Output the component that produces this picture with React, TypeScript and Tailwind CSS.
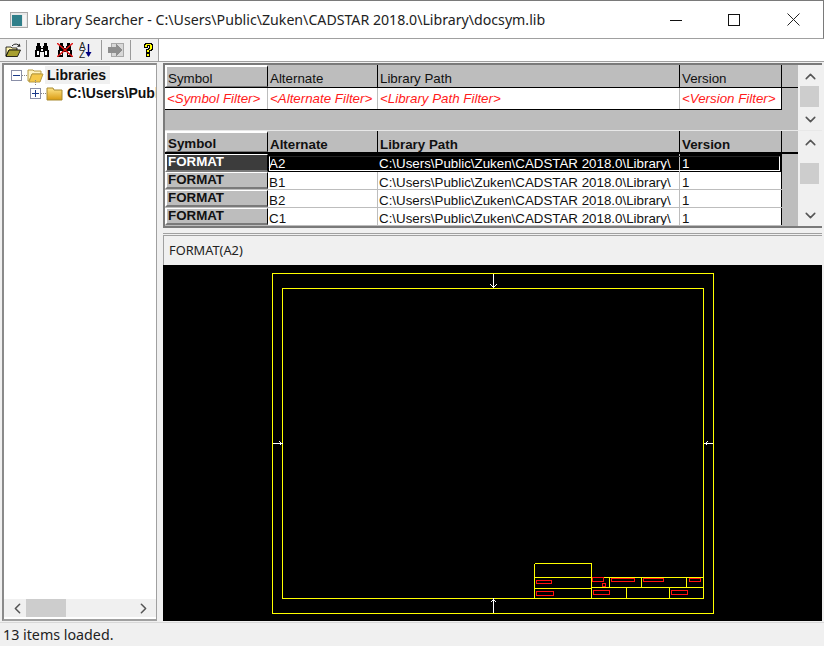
import { ChevronDown, ChevronLeft, ChevronRight, ChevronUp } from "lucide-react";

const columns = ["w-[103px]", "w-[110px]", "w-[302px]", "w-[102px]"];
const libraryPath = "C:\\Users\\Public\\Zuken\\CADSTAR 2018.0\\Library\\";

function HeaderCell({ label, width, bold, raised }: { label: string; width: string; bold?: boolean; raised?: boolean }) {
  return (
    <div
      className={`${width} h-full shrink-0 flex items-end bg-[#bdbdbd] text-[13.33px] leading-[15px] text-[#111] border-r border-black ${bold ? "font-bold pb-0" : "pb-[1px]"} ${
        raised ? "pl-[1px] !pb-0 border-t-2 border-l-2 border-b border-t-white border-l-white border-b-[#7a7a7a]" : "pl-[2px]"
      }`}
    >
      {label}
    </div>
  );
}

function FilterCell({ label, width, last }: { label: string; width: string; last?: boolean }) {
  return (
    <div className={`${width} h-full shrink-0 flex items-center pl-[2px] bg-white italic text-[13.33px] text-[#ff1a1a] whitespace-nowrap overflow-hidden border-r ${last ? "border-black" : "border-[#bdbdbd]"}`}>
      {label}
    </div>
  );
}

function ScrollBar({ thumbOffset }: { thumbOffset: string }) {
  return (
    <div className="w-[24px] h-full shrink-0 flex flex-col items-center bg-[#f0f0f0] relative">
      <ChevronUp className="w-[17px] h-[17px] mt-[3px] text-[#555]" strokeWidth={2.2} />
      <div className={`absolute left-[2px] w-[19px] h-[21px] bg-[#cdcdcd] ${thumbOffset}`} />
      <ChevronDown className="w-[17px] h-[17px] mt-auto mb-[2px] text-[#555]" strokeWidth={2.2} />
    </div>
  );
}

function SymbolRow({ alt, selected }: { alt: string; selected?: boolean }) {
  return (
    <div className={`h-[18px] flex text-[13.33px] leading-[16px] relative ${selected ? "bg-black text-white" : "bg-white text-[#111] border-b border-[#bdbdbd]"}`}>
      <div
        className={`${columns[0]} shrink-0 pl-[1px] font-bold leading-[14px] border-t border-l-2 border-b-2 border-r border-t-white border-l-white border-b-[#7a7a7a] border-r-black overflow-hidden ${
          selected ? "bg-[#3c3c3c] text-white" : "bg-[#bdbdbd] text-[#111]"
        }`}
      >
        FORMAT
      </div>
      <div className={`${columns[1]} shrink-0 pl-[1px] ${selected ? "pt-[2px] border-black" : "pt-[3px] border-[#bdbdbd]"} border-r overflow-hidden`}>{alt}</div>
      <div className={`${columns[2]} shrink-0 pl-[1px] ${selected ? "pt-[2px]" : "pt-[3px]"} border-r border-[#bdbdbd] overflow-hidden whitespace-nowrap`}>{libraryPath}</div>
      <div className={`${columns[3]} shrink-0 pl-[2px] ${selected ? "pt-[2px]" : "pt-[3px] border-r border-black"} overflow-hidden`}>1</div>
      {selected && <div className="absolute left-[104px] right-[2px] top-[2px] bottom-[1px] border border-white border-t-[#222] pointer-events-none" />}
    </div>
  );
}

function Binoculars({ crossed }: { crossed?: boolean }) {
  return (
    <svg className="shrink-0" width="16" height="14" viewBox="0 0 16 14" shapeRendering="crispEdges">
      <path d="M3 0h3v3h1v2h2V3h1V0h3v3h1v4h1v7H10V9H6v5H1V7h1V3h1z" fill="#000" />
      <path d="M3 8h2v4H3zM11 8h2v4h-2zM7 6h2v2H7z" fill="#fff" />
      {crossed && <path d="M0 0L16 14M16 0L0 14" stroke="#e01818" strokeWidth="1.4" shapeRendering="auto" />}
    </svg>
  );
}

function Separator() {
  return <div className="w-[1px] h-[20px] shrink-0 bg-[#9a9a9a]" />;
}

function Toolbar() {
  return (
    <div className="h-[23px] shrink-0 flex bg-white border-b border-[#a0a0a0]">
      <div className="w-[159px] h-full flex items-center pl-[5px] bg-[#f0f0f0] border-r border-[#a0a0a0]">
        <svg className="shrink-0 mr-[5px]" width="16" height="14" viewBox="0 0 16 14">
          <path d="M1 13V4h5l1 1h5v2H4L1 13z" fill="#fff6b0" stroke="#000" strokeWidth="0.8" />
          <path d="M1 13.500L4 7h11.500l-3 6.500z" fill="#a8a030" stroke="#000" strokeWidth="0.8" />
          <path d="M7 3C8.500 1 11 0.500 13.500 1.800" fill="none" stroke="#222" strokeWidth="1" />
          <path d="M15.500 3.500L12 4L14.500 0.500z" fill="#222" />
        </svg>
        <Separator />
        <div className="w-[7px] shrink-0" />
        <Binoculars />
        <div className="w-[7px] shrink-0" />
        <Binoculars crossed />
        <svg className="ml-[6px] shrink-0" width="13" height="16" viewBox="0 0 13 16">
          <text x="0" y="7.500" fontSize="10" fontFamily="Liberation Sans" fill="#222">A</text>
          <text x="0" y="15.500" fontSize="10" fontFamily="Liberation Sans" fill="#222">Z</text>
          <path d="M9.500 2v12" stroke="#000080" strokeWidth="1.4" />
          <path d="M6.500 10h6l-3 5z" fill="#000080" />
        </svg>
        <div className="w-[9px] shrink-0" />
        <Separator />
        <div className="w-[6px] shrink-0" />
        <svg className="shrink-0" width="16" height="14" viewBox="0 0 16 14" shapeRendering="crispEdges">
          <path d="M3 0.500h12.500v13H3z" fill="#d8d8d8" stroke="#a8a8a8" />
          <path d="M0 4h8V1l6 6-6 6V10H0z" fill="#8e8e8e" />
        </svg>
        <div className="w-[6px] shrink-0" />
        <Separator />
        <div className="w-[12px] shrink-0" />
        <svg className="shrink-0" width="11" height="14" viewBox="0 0 11 14" shapeRendering="crispEdges">
          <path d="M2.500 0.500h6v1h1v5h-1v1h-2v2h-3v-3h2v-1h1v-3h-2v2h-3v-3h1zM3.500 10.500h3v3h-3z" fill="#ffff00" stroke="#000" />
        </svg>
      </div>
    </div>
  );
}

function Drawing() {
  const yellow = "#ffff00";
  const red = "#ff1010";
  const lines = [
    "M534.500 563.500H591.500V598.500M534.500 563.500V598.500",
    "M534.500 577.500H703.500M534.500 588.500H591.500M591.500 587.500H703.500",
    "M609.500 577.500V587.500M641.500 577.500V587.500M686.500 577.500V587.500",
    "M626.500 587.500V598.500M669.500 587.500V598.500",
  ];
  const redBoxes = [
    [536.5, 580.5, 15, 3],
    [536.5, 591.5, 17, 4],
    [592.5, 577.5, 11, 4],
    [602.5, 583.5, 3, 3],
    [611.5, 578.5, 23, 3],
    [643.5, 578.5, 20, 3],
    [689.5, 578.5, 11, 3],
    [593.5, 590.5, 16, 4],
    [671.5, 590.5, 16, 4],
  ];
  return (
    <svg className="w-full h-full block" viewBox="163 265 659 356" shapeRendering="crispEdges" fill="none">
      <rect x="272.5" y="273.5" width="441" height="340" stroke={yellow} />
      <rect x="282.5" y="288.5" width="421" height="310" stroke={yellow} />
      {lines.map((d) => (
        <path key={d} d={d} stroke={yellow} />
      ))}
      {redBoxes.map(([x, y, w, h]) => (
        <rect key={`${x}-${y}`} x={x} y={y} width={w} height={h} stroke={red} />
      ))}
      <g stroke="#ffffff">
        <path d="M493.500 274V288M490.500 284.500L493.500 287.500L496.500 284.500" />
        <path d="M493.500 598V613M490.500 602.500L493.500 599.500L496.500 602.500" />
        <path d="M273 443.500H283M279.500 441.500L281.500 443.500L279.500 445.500" />
        <path d="M704 443.500H713M707.500 441.500L705.500 443.500L707.500 445.500" />
      </g>
    </svg>
  );
}

function TreeBox({ open }: { open?: boolean }) {
  return (
    <span className="w-[11px] h-[11px] shrink-0 border border-[#8a8fa8] relative flex items-center justify-center bg-white">
      <span className="w-[7px] h-[1px] bg-[#1a3a8a]" />
      {!open && <span className="absolute w-[1px] h-[7px] bg-[#1a3a8a]" />}
    </span>
  );
}

export default function App() {
  return (
    <div className="w-[824px] h-[646px] flex flex-col overflow-hidden bg-[#f0f0f0] text-[#111] font-['Liberation_Sans',sans-serif]">
      {/* Title bar */}
      <div className="h-[39px] shrink-0 flex items-center bg-white border-t border-r border-[#7a7a7a] border-b border-b-[#a0a0a0]">
        <svg className="ml-[10px] shrink-0" width="18" height="16" viewBox="0 0 18 16" shapeRendering="crispEdges">
          <rect x="0.5" y="0.5" width="17" height="15" fill="#e8e8e8" stroke="#a8a8a8" />
          <rect x="2" y="3" width="10" height="11" fill="#2f7f8a" />
          <rect x="13" y="3" width="3" height="11" fill="#f4f4f4" />
        </svg>
        <span className="ml-[7px] font-['Noto_Sans',sans-serif] text-[14.17px] text-[#222] whitespace-nowrap">
          {"Library Searcher - C:\\Users\\Public\\Zuken\\CADSTAR 2018.0\\Library\\docsym.lib"}
        </span>
        <div className="ml-auto flex items-center mr-[23px]">
          <svg width="12" height="12" viewBox="0 0 12 12" shapeRendering="crispEdges" className="mr-[46px]">
            <path d="M0 6.500H12" stroke="#111" />
          </svg>
          <svg width="12" height="12" viewBox="0 0 12 12" shapeRendering="crispEdges" className="mr-[47px]">
            <rect x="0.5" y="0.5" width="11" height="11" fill="none" stroke="#111" />
          </svg>
          <svg width="13" height="13" viewBox="0 0 13 13">
            <path d="M0.500 0.500L12.500 12.500M12.500 0.500L0.500 12.500" stroke="#222" />
          </svg>
        </div>
      </div>

      <Toolbar />

      {/* Main area */}
      <div className="flex-1 min-h-0 flex">
        {/* Tree */}
        <div className="w-[155px] shrink-0 flex flex-col ml-[2px] mt-[1px] mb-[1px] bg-white border-t-2 border-l-2 border-[#8a8a8a] border-r border-r-[#a0a0a0] border-b-2 border-b-[#a0a0a0]">
          <div className="flex-1 min-h-0 pt-[1px] text-[14px] font-bold overflow-hidden">
            <div className="flex items-center h-[18px] pl-[7px]">
              <TreeBox open />
              <span className="w-[5px] h-[1px] shrink-0 border-t border-dotted border-[#888]" />
              <svg className="shrink-0" width="17" height="15" viewBox="0 0 17 15">
                <path d="M1 13V2h5l1 1h7v3H5L2 13z" fill="#fff3c0" stroke="#b89a40" />
                <path d="M2 14l3-8h11l-3 8z" fill="#f5c84a" stroke="#b89a40" />
              </svg>
              <span className="ml-[1px] pl-[2px] pr-[4px] bg-[#f0f0f0] leading-[18px]">Libraries</span>
            </div>
            <div className="flex items-center h-[18px] pl-[26px] whitespace-nowrap relative">
              <span className="absolute left-[31px] top-[-4px] h-[5px] border-l border-dotted border-[#888]" />
              <TreeBox />
              <span className="w-[5px] h-[1px] shrink-0 border-t border-dotted border-[#888]" />
              <svg className="shrink-0" width="17" height="15" viewBox="0 0 17 15">
                <defs>
                  <linearGradient id="folder" x1="0" y1="0" x2="0" y2="1">
                    <stop offset="0" stopColor="#ffe68a" />
                    <stop offset="1" stopColor="#d99a10" />
                  </linearGradient>
                </defs>
                <path d="M1 14V2h6l1 2h8v10z" fill="url(#folder)" stroke="#a88a30" />
              </svg>
              <span className="ml-[4px]">{"C:\\Users\\Public\\Zuken"}</span>
            </div>
          </div>
          <div className="h-[18px] shrink-0 flex items-center bg-[#f0f0f0] mb-[2px]">
            <ChevronLeft className="w-[17px] h-[17px] ml-[5px] text-[#555]" strokeWidth={2.2} />
            <div className="w-[40px] h-[18px] bg-[#cdcdcd]" />
            <ChevronRight className="w-[17px] h-[17px] ml-auto mr-[4px] text-[#555]" strokeWidth={2.2} />
          </div>
        </div>

        {/* Right side */}
        <div className="flex-1 min-w-0 flex flex-col ml-[6px] mr-[2px]">
          {/* Tables */}
          <div className="h-[165px] shrink-0 mt-[1px] border-t-2 border-l-2 border-b-2 border-[#7a7a7a] flex flex-col">
            <div className="h-[66px] shrink-0 flex border-b border-[#e8e8e8]">
              <div className="flex-1 flex flex-col bg-[#bdbdbd]">
                <div className="h-[23px] shrink-0 flex border-b border-black">
                  <HeaderCell label="Symbol" width={columns[0]} raised />
                  <HeaderCell label="Alternate" width={columns[1]} />
                  <HeaderCell label="Library Path" width={columns[2]} />
                  <HeaderCell label="Version" width={columns[3]} />
                </div>
                <div className="h-[22px] shrink-0 flex border-b border-black w-[617px]">
                  <FilterCell label="<Symbol Filter>" width={columns[0]} />
                  <FilterCell label="<Alternate Filter>" width={columns[1]} />
                  <FilterCell label="<Library Path Filter>" width={columns[2]} />
                  <FilterCell label="<Version Filter>" width={columns[3]} last />
                </div>
              </div>
              <ScrollBar thumbOffset="top-[21px]" />
            </div>
            <div className="h-[95px] shrink-0 flex">
              <div className="flex-1 flex flex-col bg-[#bdbdbd]">
                <div className="h-[23px] shrink-0 flex border-b-2 border-black">
                  <HeaderCell label="Symbol" width={columns[0]} bold raised />
                  <HeaderCell label="Alternate" width={columns[1]} bold />
                  <HeaderCell label="Library Path" width={columns[2]} bold />
                  <HeaderCell label="Version" width={columns[3]} bold />
                </div>
                <div className="w-[617px]">
                  <SymbolRow alt="A2" selected />
                  <SymbolRow alt="B1" />
                  <SymbolRow alt="B2" />
                  <SymbolRow alt="C1" />
                </div>
              </div>
              <ScrollBar thumbOffset="top-[32px]" />
            </div>
          </div>

          <div className="h-[5px] shrink-0" />
          <div className="h-[3px] shrink-0 border-t border-b border-[#a0a0a0]" />

          {/* Preview */}
          <div className="h-[29px] shrink-0 flex items-center pl-[5px] border-l border-[#a0a0a0] font-['Noto_Sans',sans-serif] text-[12.8px] text-[#222]">FORMAT(A2)</div>
          <div className="h-[356px] shrink-0 bg-black">
            <Drawing />
          </div>
        </div>
      </div>

      {/* Status bar */}
      <div className="h-[24px] shrink-0 flex items-center pl-[3px] pt-[1px] border-t border-[#d8d8d8] font-['Noto_Sans',sans-serif] text-[14.28px] text-[#222]">13 items loaded.</div>
    </div>
  );
}
